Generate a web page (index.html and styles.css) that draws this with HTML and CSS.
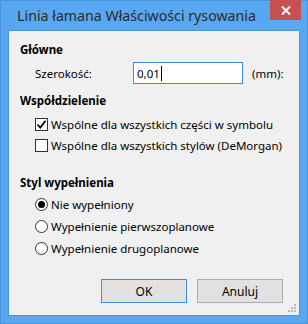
FILE: index.html
```html
<!DOCTYPE html>
<html lang="pl">
<head>
  <meta charset="UTF-8">
  <title>Linia łamana Właściwości rysowania</title>
  <link rel="stylesheet" href="styles.css">
</head>
<body>
  <div class="window">
    <div class="titlebar">
      <div class="title">Linia łamana Właściwości rysowania</div>
      <div class="close">
        <svg width="10" height="9" viewBox="0 0 10 9"><path d="M1 0.5 L9 8.5 M9 0.5 L1 8.5" stroke="#fff" stroke-width="2"/></svg>
      </div>
    </div>

    <div class="client">
      <div class="heading h-main">Główne</div>
      <div class="row width-row">
        <span class="label">Szerokość:</span>
        <div class="input"><span class="value">0,01</span><span class="caret"></span></div>
        <span class="unit">(mm):</span>
      </div>

      <div class="heading h-share">Współdzielenie</div>
      <div class="option">
        <span class="check on">
          <svg width="11" height="11" viewBox="0 0 11 11"><path d="M1.5 5.5 L4.3 8.5 L9.5 1.8" fill="none" stroke="#000" stroke-width="1.8"/></svg>
        </span>
        <span>Wspólne dla wszystkich części w symbolu</span>
      </div>
      <div class="option">
        <span class="check"></span>
        <span>Wspólne dla wszystkich stylów (DeMorgan)</span>
      </div>

      <div class="heading h-fill">Styl wypełnienia</div>
      <div class="option radio-row">
        <span class="radio on"></span>
        <span>Nie wypełniony</span>
      </div>
      <div class="option radio-row">
        <span class="radio"></span>
        <span>Wypełnienie pierwszoplanowe</span>
      </div>
      <div class="option radio-row">
        <span class="radio"></span>
        <span>Wypełnienie drugoplanowe</span>
      </div>

      <div class="buttons">
        <button class="btn default">OK</button>
        <button class="btn">Anuluj</button>
      </div>

      <svg class="grip" width="10" height="10" viewBox="0 0 10 10">
        <rect x="7" y="1" width="2" height="2" fill="#b9b9b9"/>
        <rect x="4" y="4" width="2" height="2" fill="#b9b9b9"/>
        <rect x="7" y="4" width="2" height="2" fill="#b9b9b9"/>
        <rect x="1" y="7" width="2" height="2" fill="#b9b9b9"/>
        <rect x="4" y="7" width="2" height="2" fill="#b9b9b9"/>
        <rect x="7" y="7" width="2" height="2" fill="#b9b9b9"/>
      </svg>
    </div>
  </div>
</body>
</html>
```

FILE: styles.css
```css
body {
  margin: 0;
  font-family: 'Noto Sans', 'Open Sans', sans-serif;
  font-size: 11.5px;
  color: #000;
}
.window {
  width: 308px;
  height: 324px;
  box-sizing: border-box;
  background-color: #58a7f0;
  border: 1px solid #4a94da;
  display: flex;
  flex-direction: column;
}
.titlebar {
  height: 29px;
  display: flex;
  align-items: flex-start;
}
.title {
  flex: 1;
  text-align: center;
  font-size: 14.2px;
  line-height: 29px;
  color: #2b2b2b;
  padding-left: 2px;
}
.close {
  width: 31px;
  height: 20px;
  margin-top: -1px;
  margin-right: 6px;
  background-color: #c75050;
  display: flex;
  align-items: center;
  justify-content: center;
}
.client {
  position: relative;
  margin: 0 7px 0 7px;
  height: 286px;
  box-sizing: border-box;
  background-color: #f0f0f0;
  border: 1px solid #4a94da;
  padding: 0 0 0 11px;
}
.heading {
  font-weight: bold;
  height: 18px;
  line-height: 18px;
}
.h-main {
  margin-top: 10px;
}
.h-share {
  margin-top: 8px;
}
.h-fill {
  margin-top: 18px;
}
.row {
  display: flex;
  align-items: center;
  height: 22px;
  margin-top: 3px;
}
.label {
  margin-left: 15px;
  width: 98px;
}
.input {
  width: 110px;
  height: 22px;
  box-sizing: border-box;
  border: 1px solid #3c8fe0;
  background-color: #fff;
  display: flex;
  align-items: center;
  padding-left: 3px;
}
.caret {
  width: 1px;
  height: 15px;
  background-color: #000;
  margin-left: 1px;
}
.unit {
  margin-left: 9px;
}
.option {
  display: flex;
  align-items: center;
  height: 21px;
  padding-left: 15px;
}
.radio-row {
  height: 22px;
}
.h-share + .option {
  margin-top: 4px;
}
.h-fill + .option {
  margin-top: 1px;
}
.check {
  width: 13px;
  height: 13px;
  box-sizing: border-box;
  border: 1px solid #333;
  background-color: #fff;
  margin-right: 3px;
  display: flex;
  align-items: center;
  justify-content: center;
}
.radio {
  width: 13px;
  height: 13px;
  box-sizing: border-box;
  border: 1px solid #333;
  border-radius: 50%;
  background-color: #fff;
  margin-right: 3px;
  display: flex;
  align-items: center;
  justify-content: center;
}
.radio.on::after {
  content: "";
  width: 7px;
  height: 7px;
  border-radius: 50%;
  background-color: #000;
}
.buttons {
  display: flex;
  justify-content: flex-end;
  gap: 10px;
  margin-top: 20px;
  padding-right: 16px;
}
.btn {
  width: 86px;
  height: 24px;
  font-family: inherit;
  font-size: 12px;
  color: #000;
  background-color: #e1e1e1;
  border: 1px solid #adadad;
  padding: 0;
}
.btn.default {
  border-color: #3c8fe0;
}
.grip {
  position: absolute;
  right: 2px;
  bottom: 2px;
}
```
